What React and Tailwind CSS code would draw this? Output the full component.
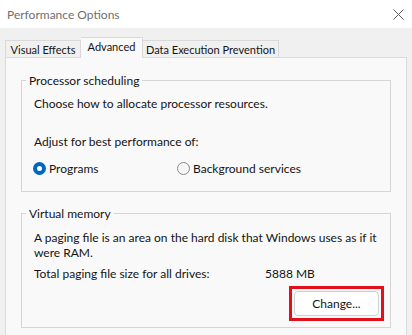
import React from "react";

const font = { fontFamily: 'Lato, "Noto Sans", sans-serif' };

function Radio({ checked, label }) {
  return (
    <label className="flex items-center gap-[3px]">
      {checked ? (
        <span className="w-[13px] h-[13px] rounded-full bg-[#0067c0] flex items-center justify-center">
          <span className="w-[5px] h-[5px] rounded-full bg-white" />
        </span>
      ) : (
        <span className="w-[13px] h-[13px] rounded-full border border-[#8a8a8a] bg-[#f6f6f6]" />
      )}
      <span>{label}</span>
    </label>
  );
}

export default function App() {
  return (
    <div
      className="w-[412px] h-[335px] overflow-hidden bg-[#f0f0f0] text-[12px] leading-[15px] text-[#141414]"
      style={font}
    >
      {/* title bar */}
      <div className="h-[28px] bg-white flex items-center justify-between pl-[7px] pr-[7px]">
        <span className="text-[#6f6f6f] text-[12px]">Performance Options</span>
        <svg width="11" height="11" viewBox="0 0 11 11" className="mr-[1px]">
          <path d="M0.5 0.5 L10.5 10.5 M10.5 0.5 L0.5 10.5" stroke="#5f5f5f" strokeWidth="1" />
        </svg>
      </div>

      {/* tabs */}
      <div className="flex items-end pl-[5px] pt-[9px] relative z-10 text-[11px]">
        <div className="h-[17px] w-[76px] flex items-center justify-center border border-b-0 border-[#d9d9d9] bg-[#f0f0f0]">
          Visual Effects
        </div>
        <div className="h-[21px] w-[62px] flex items-center justify-center border border-l-0 border-b-0 border-[#d9d9d9] bg-[#f9f9f9] -mb-px pb-[3px]">
          Advanced
        </div>
        <div className="h-[17px] w-[136px] flex items-center justify-center border border-l-0 border-b-0 border-[#d9d9d9] bg-[#f0f0f0]">
          Data Execution Prevention
        </div>
      </div>

      {/* panel */}
      <div className="ml-[5px] mr-[5px] h-[300px] border border-[#dadada] bg-[#f9f9f9] px-[15px] pt-[15px]">
        <fieldset className="border border-[#d5d5d5] px-[12px] pb-[15px]">
          <legend className="px-[3px] -ml-[8px]">Processor scheduling</legend>
          <p className="mt-[8px]">Choose how to allocate processor resources.</p>
          <p className="mt-[23px]">Adjust for best performance of:</p>
          <div className="mt-[12px] flex -ml-[1px]">
            <div className="w-[144px]">
              <Radio checked label="Programs" />
            </div>
            <Radio label="Background services" />
          </div>
        </fieldset>

        <fieldset className="mt-[14px] border border-[#d5d5d5] px-[12px] pb-[6px]">
          <legend className="px-[3px] -ml-[8px]">Virtual memory</legend>
          <p className="mt-[9px] whitespace-nowrap">
            A paging file is an area on the hard disk that Windows uses as if it
            <br />
            were RAM.
          </p>
          <div className="mt-[6px] flex">
            <span className="w-[231px]">Total paging file size for all drives:</span>
            <span>5888 MB</span>
          </div>
          <div className="mt-[5px] -mr-[6px] flex justify-end">
            <div className="border-[3px] border-[#e3101b] p-[2px]">
              <button className="w-[85px] h-[25px] bg-white border border-[#cfcfcf] rounded-[4px]">
                Change...
              </button>
            </div>
          </div>
        </fieldset>
      </div>
    </div>
  );
}
